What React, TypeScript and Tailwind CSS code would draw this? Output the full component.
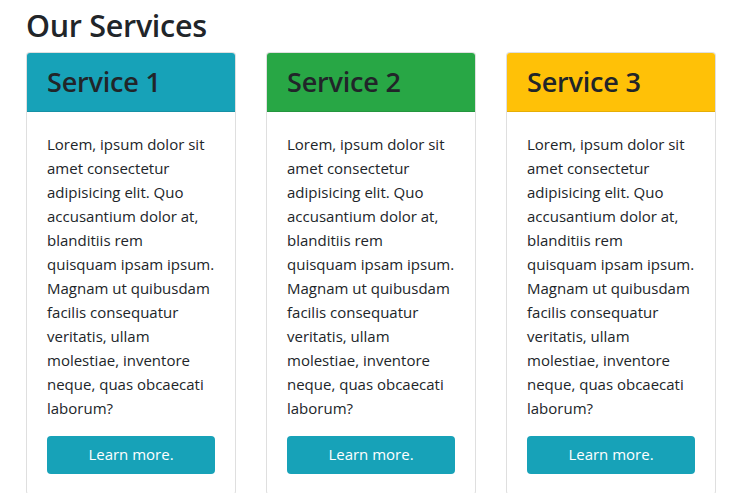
import React from 'react'

const lines = [
  'Lorem, ipsum dolor sit',
  'amet consectetur',
  'adipisicing elit. Quo',
  'accusantium dolor at,',
  'blanditiis rem',
  'quisquam ipsam ipsum.',
  'Magnam ut quibusdam',
  'facilis consequatur',
  'veritatis, ullam',
  'molestiae, inventore',
  'neque, quas obcaecati',
  'laborum?',
]

const services = [
  { title: 'Service 1', head: 'bg-[#17a2b8] border-[#1591a5]' },
  { title: 'Service 2', head: 'bg-[#28a745] border-[#24963e]' },
  { title: 'Service 3', head: 'bg-[#ffc107] border-[#e6ae06]' },
]

const ServiceCard: React.FC<{ title: string; head: string }> = ({ title, head }) => (
  <div className="w-[210px] shrink-0 rounded border border-black/[.125] bg-white overflow-hidden">
    <div className={`px-5 py-3 border-b ${head}`}>
      <h3 className="text-[27px] leading-[33.6px] font-semibold text-[#212529] tracking-[-0.2px]">{title}</h3>
    </div>
    <div className="p-5">
      <p className="mb-4 text-[15px] leading-6 text-[#212529]">
        {lines.map((l, i) => (
          <span key={i} className="block whitespace-nowrap">{l}</span>
        ))}
      </p>
      <button className="w-full h-[38px] rounded bg-[#17a2b8] text-white text-[15px]">Learn more.</button>
    </div>
  </div>
)

export default function App() {
  return (
    <div className="min-h-screen bg-white pl-[26px] pt-[6px] font-['Open_Sans',sans-serif]">
      <h2 className="text-[30.5px] leading-[38px] font-semibold text-[#212529] mb-2 tracking-[-0.3px]">Our Services</h2>
      <div className="flex gap-[30px]">
        {services.map((s) => (
          <ServiceCard key={s.title} title={s.title} head={s.head} />
        ))}
      </div>
    </div>
  )
}
